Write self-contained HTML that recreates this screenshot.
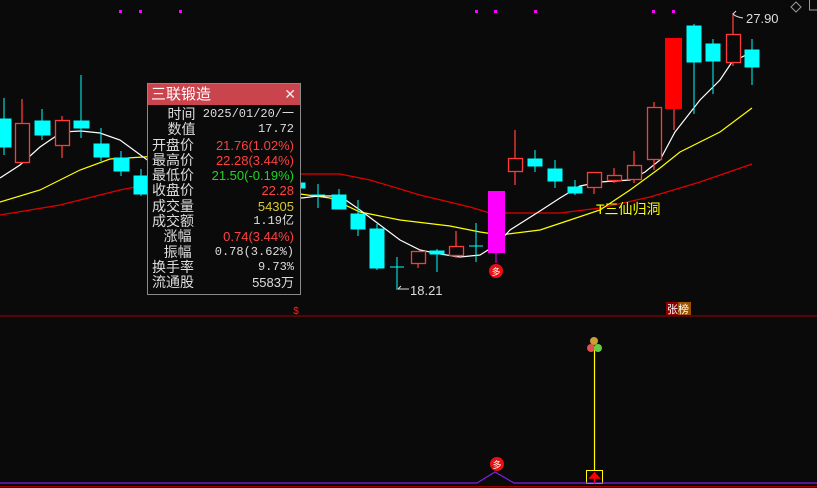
<!DOCTYPE html>
<html><head><meta charset="utf-8"><style>
body{margin:0;width:817px;height:488px;background:#0a0a0a;overflow:hidden;position:relative;font-family:"Liberation Sans","Noto Sans CJK SC",sans-serif}
svg{position:absolute;left:0;top:0}
#p{position:absolute;left:147px;top:83px;width:154px;height:212px;background:#0a0a0a;border:1px solid #8a8a8a;box-sizing:border-box}
#h{height:21px;background:#c9444c;color:#fff;font-size:15px;line-height:21px;padding-left:3px;position:relative}
#h span{position:absolute;right:4px;top:0;color:#eee;font-size:14px}
#rows{padding-top:2px}
.r{height:15.3px;line-height:15.3px;font-size:14px;position:relative;color:#ddd}
.r .k{position:absolute;left:4px}
.r .v{position:absolute;right:6px;font-family:"Liberation Sans","Noto Sans CJK SC",sans-serif;font-size:13px}
.m{font-family:"Liberation Mono","Noto Sans CJK SC",monospace!important;font-size:12px!important}
.red{color:#ff4040}.grn{color:#22d322}.yel{color:#d6c832}
</style></head><body>
<svg width="817" height="488" viewBox="0 0 817 488">
<g fill="#ff00ff"><rect x="119" y="10" width="3" height="3"/><rect x="139" y="10" width="3" height="3"/><rect x="179" y="10" width="3" height="3"/><rect x="475" y="10" width="3" height="3"/><rect x="494" y="10" width="3" height="3"/><rect x="534" y="10" width="3" height="3"/><rect x="652" y="10" width="3" height="3"/><rect x="672" y="10" width="3" height="3"/></g>
<path d="M791 7 L796 2 L801 7 L796 12Z" fill="none" stroke="#999"/>
<rect x="809.5" y="-2" width="10" height="12" fill="none" stroke="#999"/>
<g fill="none" stroke-width="1.2">
<polyline stroke="#e00000" points="0,215 60,205 120,190 160,182 300,174 340,174 370,180 420,195 470,207 490,213 520,213 560,213 600,208 650,197 700,182 752,164"/>
<polyline stroke="#ffff00" points="0,202 40,190 80,170 110,159 160,156 300,194 330,198 360,212 400,220 450,226 480,232 500,235 540,230 570,220 600,210 630,190 660,168 680,152 720,132 752,108"/>
<polyline stroke="#ffffff" points="0,178 20,165 40,147 62,132 81,131 100,133 120,140 150,162 302,198 318,196 340,196 360,210 380,225 400,240 420,250 440,254 460,257 480,255 496,245 510,230 540,211 560,198 580,186 600,182 630,180 645,172 660,160 675,132 700,100 720,80 732,62 752,52"/>
</g>
<g stroke="#00ffff" fill="#00ffff">
<line x1="4" y1="98" x2="4" y2="155"/><rect x="-4" y="119" width="15" height="28"/>
<line x1="42" y1="109" x2="42" y2="140"/><rect x="35" y="121" width="15" height="14"/>
<line x1="81" y1="75" x2="81" y2="138"/><rect x="74" y="121" width="15" height="7"/>
<line x1="101" y1="128" x2="101" y2="161"/><rect x="94" y="144" width="15" height="13"/>
<line x1="121" y1="151" x2="121" y2="176"/><rect x="114" y="158" width="15" height="13"/>
<line x1="141" y1="169" x2="141" y2="196"/><rect x="134" y="176" width="15" height="18"/>
<rect x="301" y="183" width="4" height="5"/>
<line x1="318" y1="184" x2="318" y2="208"/><line x1="311" y1="195" x2="325" y2="195"/>
<line x1="339" y1="189" x2="339" y2="208"/><rect x="332" y="195" width="14" height="14"/>
<line x1="358" y1="200" x2="358" y2="236"/><rect x="351" y="214" width="14" height="15"/>
<line x1="377" y1="224" x2="377" y2="270"/><rect x="370" y="229" width="14" height="39"/>
<line x1="397" y1="257" x2="397" y2="290"/><line x1="390" y1="267" x2="404" y2="267"/>
<line x1="437" y1="249" x2="437" y2="272"/><rect x="430" y="251" width="14" height="3"/>
<line x1="476" y1="223" x2="476" y2="262"/><line x1="469" y1="246" x2="483" y2="246"/>
<line x1="535" y1="150" x2="535" y2="172"/><rect x="528" y="159" width="14" height="7"/>
<line x1="555" y1="160" x2="555" y2="188"/><rect x="548" y="169" width="14" height="12"/>
<line x1="575" y1="180" x2="575" y2="195"/><rect x="568" y="187" width="14" height="6"/>
<line x1="694" y1="24" x2="694" y2="114"/><rect x="687" y="26" width="14" height="36"/>
<line x1="713" y1="39" x2="713" y2="94"/><rect x="706" y="44" width="14" height="17"/>
<line x1="752" y1="39" x2="752" y2="85"/><rect x="745" y="50" width="14" height="17"/>
</g>
<g stroke="#ff3a3a" fill="#0a0a0a" stroke-width="1.3">
<line x1="22" y1="99" x2="22" y2="163"/><rect x="15.5" y="123.5" width="14" height="39"/>
<line x1="62" y1="116" x2="62" y2="158"/><rect x="55.5" y="120.5" width="14" height="25"/>
<line x1="418" y1="263" x2="418" y2="268"/><rect x="411.5" y="251.5" width="14" height="12"/>
<line x1="456" y1="231" x2="456" y2="258"/><rect x="449.5" y="246.5" width="14" height="9"/>
<line x1="515" y1="130" x2="515" y2="185"/><rect x="508.5" y="158.5" width="14" height="13"/>
<line x1="594" y1="172" x2="594" y2="194"/><rect x="587.5" y="172.5" width="14" height="15"/>
<line x1="614" y1="168" x2="614" y2="183"/><rect x="607.5" y="175.5" width="14" height="5"/>
<line x1="634" y1="151" x2="634" y2="183"/><rect x="627.5" y="165.5" width="14" height="14"/>
<line x1="654" y1="102" x2="654" y2="170"/><rect x="647.5" y="107.5" width="14" height="52"/>
<line x1="674" y1="109" x2="674" y2="130"/><rect x="665" y="38" width="17" height="71" fill="#ff0000" stroke="none"/>
<line x1="733" y1="13" x2="733" y2="66"/><rect x="726.5" y="34.5" width="14" height="28"/>
</g>
<line x1="496" y1="253" x2="496" y2="263" stroke="#ff00ff"/>
<rect x="488" y="191" width="17" height="62" fill="#ff00ff"/>
<circle cx="496" cy="271" r="7" fill="#e81010"/><text x="496" y="275" font-size="9" fill="#fff" text-anchor="middle">多</text>
<text x="410" y="295" font-size="13" fill="#ddd">18.21</text><path d="M398 289 H409 M398 289 l3 -3" stroke="#ddd" fill="none"/>
<text x="746" y="23" font-size="13" fill="#ddd">27.90</text><path d="M733 14 l3 -3 M733 14 Q736 17 743 18" stroke="#ddd" fill="none"/>
<text x="596" y="214" font-size="14" fill="#ffff00">T三仙归洞</text>
<line x1="0" y1="316" x2="817" y2="316" stroke="#a00000"/>
<text x="296" y="314" font-size="10" fill="#ff2020" text-anchor="middle">$</text>
<rect x="666" y="302" width="12" height="13" fill="#900000"/><rect x="678" y="302" width="13" height="13" fill="#9a5000"/>
<text x="667" y="313" font-size="11" fill="#fff">张榜</text>
<line x1="594.5" y1="348" x2="594.5" y2="470" stroke="#ffff00" stroke-width="1.2"/>
<circle cx="594" cy="341" r="4" fill="#c9a030"/><circle cx="591" cy="348" r="4" fill="#e05050"/><circle cx="598" cy="348" r="4" fill="#60d040"/>
<rect x="586.5" y="470.5" width="16" height="13" fill="none" stroke="#ffff00"/>
<path d="M594.5 484 V477 M590 478 L594.5 473 L599 478Z" stroke="#ff0000" fill="#ff0000" stroke-width="1.5"/>
<polyline points="0,483 477,483 495,472 514,483 817,483" fill="none" stroke="#8020e0" stroke-width="1.2"/>
<line x1="0" y1="486.5" x2="817" y2="486.5" stroke="#a00000"/>
<circle cx="497" cy="464" r="7" fill="#e81010"/><text x="497" y="468" font-size="9" fill="#fff" text-anchor="middle">多</text>
</svg>
<div id="p">
<div id="h">三联锻造<span>✕</span></div>
<div id="rows">
<div class="r"><span class="k">&nbsp;&nbsp;&nbsp;&nbsp;时间</span><span class="v m">2025/01/20/一</span></div>
<div class="r"><span class="k">&nbsp;&nbsp;&nbsp;&nbsp;数值</span><span class="v m">17.72</span></div>
<div class="r"><span class="k">开盘价</span><span class="v red">21.76(1.02%)</span></div>
<div class="r"><span class="k">最高价</span><span class="v red">22.28(3.44%)</span></div>
<div class="r"><span class="k">最低价</span><span class="v grn">21.50(-0.19%)</span></div>
<div class="r"><span class="k">收盘价</span><span class="v red">22.28</span></div>
<div class="r"><span class="k">成交量</span><span class="v yel">54305</span></div>
<div class="r"><span class="k">成交额</span><span class="v m">1.19亿</span></div>
<div class="r"><span class="k">&nbsp;&nbsp;&nbsp;涨幅</span><span class="v red">0.74(3.44%)</span></div>
<div class="r"><span class="k">&nbsp;&nbsp;&nbsp;振幅</span><span class="v m">0.78(3.62%)</span></div>
<div class="r"><span class="k">换手率</span><span class="v m">9.73%</span></div>
<div class="r"><span class="k">流通股</span><span class="v">5583万</span></div>
</div>
</div>
</body></html>
